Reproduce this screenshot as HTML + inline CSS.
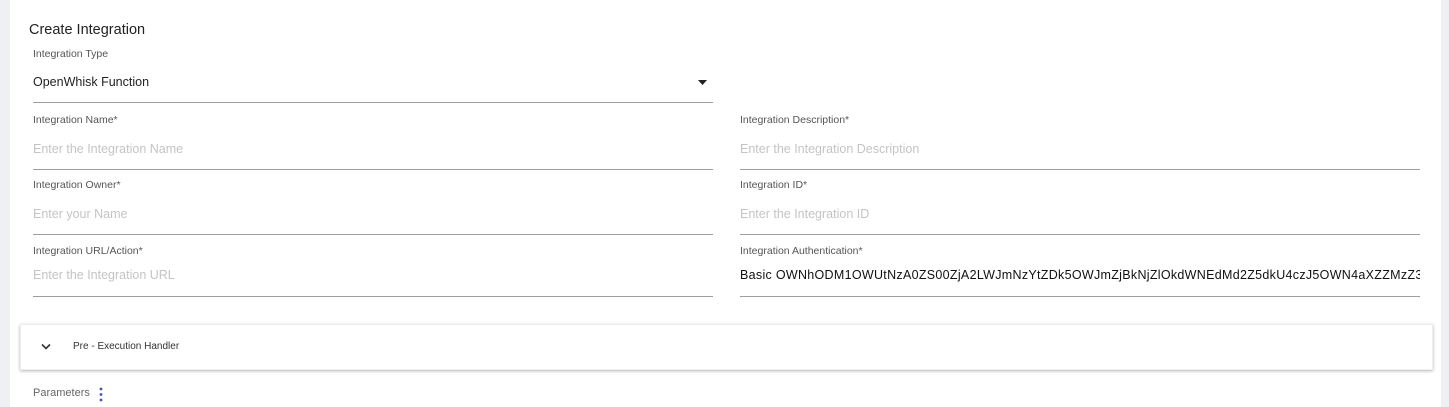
<!DOCTYPE html>
<html><head><meta charset="utf-8"><style>
body{margin:0;width:1449px;height:407px;background:#eef0f4;font-family:"Liberation Sans",sans-serif;overflow:hidden;position:relative}
.card{position:absolute;left:10px;top:0;width:1431px;height:407px;background:#fff}
.t{position:absolute;white-space:nowrap}
.lab{font-size:10.5px;color:#555}
.ph{font-size:12.5px;color:#c4c4c4}
.line{position:absolute;height:1px;background:#9e9e9e}
</style></head><body>
<div class="card"></div>
<div class="t" style="left:29px;top:22px;font-size:14.5px;color:#222">Create Integration</div>
<div class="t lab" style="left:33px;top:48px">Integration Type</div>
<div class="t" style="left:33px;top:75px;font-size:12.5px;color:#222">OpenWhisk Function</div>
<svg style="position:absolute;left:698px;top:80px" width="9" height="5"><path d="M0 0H9L4.5 5Z" fill="#222"/></svg>
<div class="line" style="left:33px;top:102px;width:680px"></div>

<div class="t lab" style="left:33px;top:114px">Integration Name*</div>
<div class="t ph" style="left:33px;top:142px">Enter the Integration Name</div>
<div class="line" style="left:33px;top:169px;width:680px"></div>
<div class="t lab" style="left:740px;top:114px">Integration Description*</div>
<div class="t ph" style="left:740px;top:142px">Enter the Integration Description</div>
<div class="line" style="left:740px;top:169px;width:680px"></div>

<div class="t lab" style="left:33px;top:179px">Integration Owner*</div>
<div class="t ph" style="left:33px;top:207px">Enter your Name</div>
<div class="line" style="left:33px;top:234px;width:680px"></div>
<div class="t lab" style="left:740px;top:179px">Integration ID*</div>
<div class="t ph" style="left:740px;top:207px">Enter the Integration ID</div>
<div class="line" style="left:740px;top:234px;width:680px"></div>

<div class="t lab" style="left:33px;top:245px">Integration URL/Action*</div>
<div class="t ph" style="left:33px;top:268px">Enter the Integration URL</div>
<div class="line" style="left:33px;top:296px;width:680px"></div>
<div class="t lab" style="left:740px;top:245px">Integration Authentication*</div>
<div class="t" style="left:740px;top:268px;width:680px;overflow:hidden;font-size:12.5px;color:#111;letter-spacing:0.3px">Basic OWNhODM1OWUtNzA0ZS00ZjA2LWJmNzYtZDk5OWJmZjBkNjZlOkdWNEdMd2Z5dkU4czJ5OWN4aXZZMzZ3</div>
<div class="line" style="left:740px;top:296px;width:680px"></div>

<div style="position:absolute;left:20px;top:324px;width:1413px;height:46px;background:#fff;box-shadow:0 1px 3px rgba(0,0,0,.3);border:1px solid #eee;box-sizing:border-box"></div>
<svg style="position:absolute;left:41px;top:343px" width="10" height="7" viewBox="0 0 10 7"><path d="M1 1.5L5 5.5L9 1.5" stroke="#333" stroke-width="1.6" fill="none"/></svg>
<div class="t" style="left:73px;top:341px;font-size:10px;color:#333">Pre - Execution Handler</div>
<div class="t" style="left:33px;top:387px;font-size:11px;color:#666">Parameters</div>
<svg style="position:absolute;left:99px;top:387px" width="4" height="15"><circle cx="2" cy="2" r="1.4" fill="#3f51b5"/><circle cx="2" cy="7.5" r="1.4" fill="#3f51b5"/><circle cx="2" cy="13" r="1.4" fill="#3f51b5"/></svg>
</body></html>
